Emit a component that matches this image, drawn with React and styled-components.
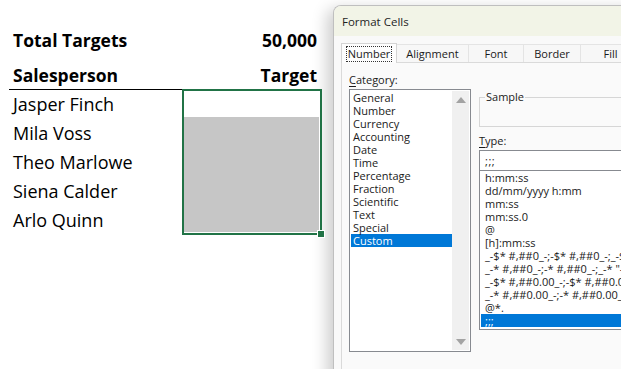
import React from "react"
import styled, { createGlobalStyle } from "styled-components"

const GlobalStyle = createGlobalStyle`
  html, body {
    margin: 0;
    padding: 0;
    background: #ffffff;
    overflow: hidden;
  }
  body {
    font-family: "Open Sans", "Noto Sans", sans-serif;
  }
`

const Page = styled.div`
  display: flex;
  width: 621px;
  height: 369px;
  overflow: hidden;
`

/* ---------- spreadsheet ---------- */

const Sheet = styled.div`
  flex: 0 0 333px;
  padding: 26px 0 0 9px;
  box-sizing: border-box;
  display: grid;
  grid-template-columns: 173px 140px;
  grid-template-rows: 35px 29px repeat(5, 29px);
  align-content: start;
  font-family: "Open Sans", sans-serif;
  color: #000;
`

const Cell = styled.div`
  grid-column: ${(p) => p.col};
  grid-row: ${(p) => p.row};
  height: 29px;
  line-height: 29px;
  padding: 0 5px 0 4px;
  font-size: ${(p) => (p.bold ? "17.5px" : "18px")};
  font-weight: ${(p) => (p.bold ? 700 : 400)};
  text-align: ${(p) => (p.right ? "right" : "left")};
  white-space: nowrap;
  border-bottom: ${(p) => (p.underline ? "1.5px solid #000" : "none")};
  box-sizing: border-box;
`

const Selection = styled.div`
  grid-column: 2;
  grid-row: 3 / 8;
  position: relative;
  margin-top: -1px;
  border: 2px solid #217346;
  display: flex;
  flex-direction: column;
  background: #fff;
`

const ActiveCell = styled.div`
  height: 26px;
`

const Shaded = styled.div`
  flex: 1;
  margin: 0 1px 1px 0;
  background: #c6c6c6;
`

const FillHandle = styled.div`
  position: absolute;
  right: -5px;
  bottom: -5px;
  width: 6px;
  height: 6px;
  background: #217346;
  border: 1px solid #fff;
`

/* ---------- dialog ---------- */

const Dialog = styled.div`
  flex: 0 0 330px;
  margin-top: 5px;
  height: 400px;
  background: #f9f9f9;
  border: 1px solid #bfbfbf;
  border-right: none;
  border-radius: 8px 0 0 0;
  box-shadow: -6px 4px 16px rgba(0, 0, 0, 0.2);
  font-family: "Open Sans", "Noto Sans", sans-serif;
  font-size: 11px;
  color: #1a1a1a;
  overflow: hidden;
`

const TitleBar = styled.div`
  height: 30px;
  display: flex;
  align-items: center;
  padding-left: 8px;
  background: #f2f4e7;
  font-size: 11.5px;
  color: #1f1f1f;
`

const DialogBody = styled.div`
  padding: 6px 0 0 7px;
`

const TabRow = styled.div`
  display: flex;
  align-items: flex-end;
  height: 20px;
`

const Tab = styled.div`
  height: ${(p) => (p.active ? "20px" : "18px")};
  width: ${(p) => p.w}px;
  box-sizing: border-box;
  display: flex;
  align-items: center;
  justify-content: center;
  background: ${(p) => (p.active ? "#fdfdfd" : "#f7f7f7")};
  border: 1px solid ${(p) => (p.active ? "#d4d4d4" : "#e4e4e4")};
  border-bottom: none;
  border-left: ${(p) => (p.first ? "" : "none")};
  margin-bottom: ${(p) => (p.active ? "-1px" : "0")};
  position: relative;
  z-index: ${(p) => (p.active ? 1 : 0)};
  color: #1a1a1a;
`

const FocusLabel = styled.span`
  outline: 1px dotted #333;
  outline-offset: 0;
  padding: 0 1px;
  line-height: 14px;
`

const Panel = styled.div`
  border: 1px solid #dadada;
  border-right: none;
  background: #fafafa;
  height: 320px;
  display: flex;
  gap: 8px;
  padding: 8px 0 0 7px;
  box-sizing: border-box;
`

const Column = styled.div`
  display: flex;
  flex-direction: column;
  width: ${(p) => (p.w ? `${p.w}px` : "auto")};
  flex: ${(p) => (p.w ? "0 0 auto" : "1")};
`

const Label = styled.div`
  height: 17px;
  line-height: 17px;
  margin-bottom: 1px;
  color: #1a1a1a;
`

const Key = styled.span`
  text-decoration: underline;
  text-underline-offset: 2px;
`

const ListBox = styled.div`
  height: 263px;
  box-sizing: border-box;
  border: 1px solid #878a90;
  background: #fff;
  display: flex;
  padding: 1px;
`

const Items = styled.div`
  flex: 1;
`

const Item = styled.div`
  height: 13px;
  line-height: 13px;
  padding-left: 2px;
  white-space: nowrap;
  background: ${(p) => (p.selected ? "#0078d7" : "transparent")};
  color: ${(p) => (p.selected ? "#fff" : "#1a1a1a")};
`

const ScrollBar = styled.div`
  width: 17px;
  background: #f0f0f0;
  display: flex;
  flex-direction: column;
  justify-content: space-between;
  align-items: center;
  padding: 6px 0 5px;
`

const Arrow = styled.div`
  width: 0;
  height: 0;
  border-left: 5px solid transparent;
  border-right: 5px solid transparent;
  border-bottom: ${(p) => (p.down ? "none" : "6px solid #a3a3a3")};
  border-top: ${(p) => (p.down ? "6px solid #a3a3a3" : "none")};
`

const Fieldset = styled.fieldset`
  margin: 19px 0 5px;
  padding: 0;
  height: 37px;
  box-sizing: border-box;
  border: 1px solid #d6d6d6;
  border-right: none;
  legend {
    padding: 0 1px;
    margin-left: 5px;
    line-height: 14px;
  }
`

const TypeInput = styled.div`
  height: 21px;
  box-sizing: border-box;
  border: 1px solid #878a90;
  border-right: none;
  background: #fff;
  padding: 0 5px;
  line-height: 19px;
  letter-spacing: 0.5px;
`

const TypeList = styled.div`
  height: 159px;
  box-sizing: border-box;
  border: 1px solid #878a90;
  border-top: none;
  border-right: none;
  background: #fff;
  padding: 0 0 0 1px;
  overflow: hidden;
`

const TypeItem = styled.div`
  height: 13px;
  line-height: 13px;
  padding-left: 4px;
  white-space: nowrap;
  background: ${(p) => (p.selected ? "#0078d7" : "transparent")};
  color: ${(p) => (p.selected ? "#fff" : "#1a1a1a")};
`

const people = ["Jasper Finch", "Mila Voss", "Theo Marlowe", "Siena Calder", "Arlo Quinn"]

const categories = [
  "General",
  "Number",
  "Currency",
  "Accounting",
  "Date",
  "Time",
  "Percentage",
  "Fraction",
  "Scientific",
  "Text",
  "Special",
  "Custom",
]

const formats = [
  "h:mm:ss",
  "dd/mm/yyyy h:mm",
  "mm:ss",
  "mm:ss.0",
  "@",
  "[h]:mm:ss",
  '_-$* #,##0_-;-$* #,##0_-;_-$* "-"_-;_-@_-',
  '_-* #,##0_-;-* #,##0_-;_-* "-"_-;_-@_-',
  '_-$* #,##0.00_-;-$* #,##0.00_-;_-$* "-"??_-;_-@_-',
  '_-* #,##0.00_-;-* #,##0.00_-;_-* "-"??_-;_-@_-',
  "@*.",
  ";;;",
]

const tabs = [
  { name: "Alignment", w: 72 },
  { name: "Font", w: 55 },
  { name: "Border", w: 57 },
  { name: "Fill", w: 60 },
]

const App = () => {
  return (
    <Page>
      <GlobalStyle />
      <Sheet>
        <Cell col={1} row={1} bold>
          Total Targets
        </Cell>
        <Cell col={2} row={1} bold right>
          50,000
        </Cell>
        <Cell col={1} row={2} bold underline>
          Salesperson
        </Cell>
        <Cell col={2} row={2} bold right underline>
          Target
        </Cell>
        {people.map((name, i) => (
          <Cell key={name} col={1} row={i + 3}>
            {name}
          </Cell>
        ))}
        <Selection>
          <ActiveCell />
          <Shaded />
          <FillHandle />
        </Selection>
      </Sheet>

      <Dialog>
        <TitleBar>Format Cells</TitleBar>
        <DialogBody>
          <TabRow>
            <Tab active first w={56}>
              <FocusLabel>Number</FocusLabel>
            </Tab>
            {tabs.map((t) => (
              <Tab key={t.name} w={t.w}>
                {t.name}
              </Tab>
            ))}
          </TabRow>
          <Panel>
            <Column w={122}>
              <Label>
                <Key>C</Key>ategory:
              </Label>
              <ListBox>
                <Items>
                  {categories.map((c) => (
                    <Item key={c} selected={c === "Custom"}>
                      {c}
                    </Item>
                  ))}
                </Items>
                <ScrollBar>
                  <Arrow />
                  <Arrow down />
                </ScrollBar>
              </ListBox>
            </Column>
            <Column>
              <Fieldset>
                <legend>Sample</legend>
              </Fieldset>
              <Label>
                <Key>T</Key>ype:
              </Label>
              <TypeInput>;;;</TypeInput>
              <TypeList>
                {formats.map((f, i) => (
                  <TypeItem key={i} selected={f === ";;;"}>
                    {f}
                  </TypeItem>
                ))}
              </TypeList>
            </Column>
          </Panel>
        </DialogBody>
      </Dialog>
    </Page>
  )
}

export default App
